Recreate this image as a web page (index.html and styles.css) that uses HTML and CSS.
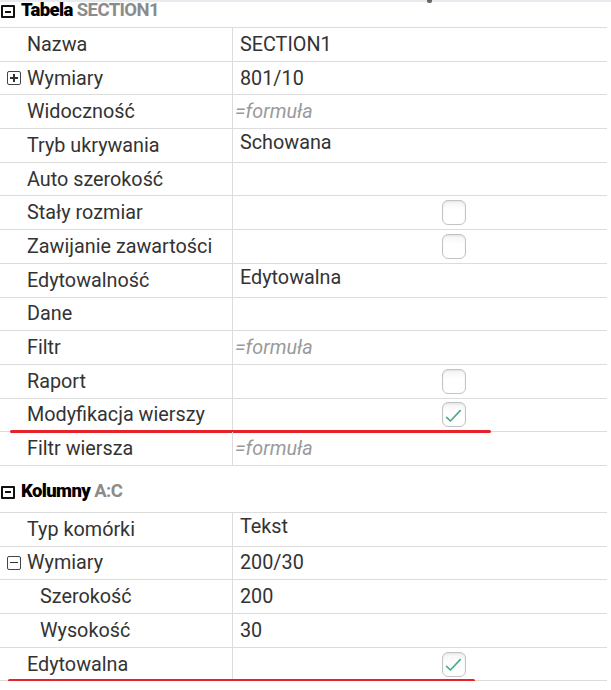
FILE: index.html
```html
<!DOCTYPE html>
<html lang="pl">
<head>
    <meta charset="UTF-8">
    <meta name="viewport" content="width=device-width, initial-scale=1.0">
    <title>Właściwości - SECTION1</title>
    <link rel="stylesheet" href="styles.css">
</head>
<body>

<div class="panel">
    <div class="top-edge"><span class="grip"></span></div>

    <section class="group">
        <div class="group-head">
            <span class="toggle-head"></span>
            <b>Tabela</b> <span class="ref">SECTION1</span>
        </div>
        <div class="props">
            <div class="row"><div class="key">Nazwa</div><div class="val">SECTION1</div></div>
            <div class="row"><div class="key with-toggle"><span class="toggle plus"></span>Wymiary</div><div class="val">801/10</div></div>
            <div class="row"><div class="key">Widoczność</div><div class="val formula">=formuła</div></div>
            <div class="row"><div class="key">Tryb ukrywania</div><div class="val select">Schowana</div></div>
            <div class="row"><div class="key">Auto szerokość</div><div class="val"></div></div>
            <div class="row"><div class="key">Stały rozmiar</div><div class="val"><span class="check"></span></div></div>
            <div class="row"><div class="key">Zawijanie zawartości</div><div class="val"><span class="check"></span></div></div>
            <div class="row"><div class="key">Edytowalność</div><div class="val select">Edytowalna</div></div>
            <div class="row"><div class="key">Dane</div><div class="val"></div></div>
            <div class="row"><div class="key">Filtr</div><div class="val formula">=formuła</div></div>
            <div class="row"><div class="key">Raport</div><div class="val"><span class="check"></span></div></div>
            <div class="row marked"><div class="key">Modyfikacja wierszy</div><div class="val">
                <span class="check">
                    <svg viewBox="0 0 24 24" width="24" height="24"><path d="M4.6 14.3 L8.4 18 L18.2 7.6" fill="none" stroke="#4cae86" stroke-width="1.7" stroke-linecap="round" stroke-linejoin="round"/></svg>
                </span>
            </div></div>
            <div class="row"><div class="key">Filtr wiersza</div><div class="val formula">=formuła</div></div>
        </div>
    </section>

    <section class="group">
        <div class="group-head">
            <span class="toggle-head"></span>
            <b>Kolumny</b> <span class="ref">A:C</span>
        </div>
        <div class="props">
            <div class="row"><div class="key">Typ komórki</div><div class="val select">Tekst</div></div>
            <div class="row"><div class="key with-toggle"><span class="toggle minus"></span>Wymiary</div><div class="val">200/30</div></div>
            <div class="row"><div class="key sub">Szerokość</div><div class="val">200</div></div>
            <div class="row"><div class="key sub">Wysokość</div><div class="val">30</div></div>
            <div class="row marked short"><div class="key">Edytowalna</div><div class="val">
                <span class="check">
                    <svg viewBox="0 0 24 24" width="24" height="24"><path d="M4.6 14.3 L8.4 18 L18.2 7.6" fill="none" stroke="#4cae86" stroke-width="1.7" stroke-linecap="round" stroke-linejoin="round"/></svg>
                </span>
            </div></div>
        </div>
    </section>
</div>

</body>
</html>
```

FILE: styles.css
```css
body {
    margin: 0;
    background: #fff;
    font-family: Roboto, "Noto Sans", Arial, sans-serif;
    color: #333;
}
.panel {
    position: relative;
    width: 611px;
    overflow: hidden;
}
.top-edge {
    position: absolute;
    top: 0;
    left: 0;
    right: 0;
    height: 2px;
    background: #e8ebef;
    z-index: 2;
}
.grip {
    position: absolute;
    left: 427px;
    top: 0;
    width: 5px;
    height: 3px;
    border-radius: 0 0 2px 2px;
    background: #666;
}

/* section header */
.group-head {
    display: flex;
    align-items: baseline;
    gap: 6px;
    height: 20px;
    padding: 0 0 7px 1px;
    font-size: 18.5px;
    line-height: 20px;
    font-weight: bold;
    color: #000;
    letter-spacing: -0.6px;
}
.group + .group .group-head {
    margin-top: 15px;
    padding-bottom: 11px;
}
.group-head .ref {
    color: #8b8b8b;
    margin-left: -2px;
}
.toggle-head {
    width: 10px;
    height: 9px;
    border: 2px solid #111;
    border-radius: 1px;
    position: relative;
    align-self: center;
    margin-top: 3px;
}
.toggle-head::after {
    content: "";
    position: absolute;
    left: 2px;
    right: 2px;
    top: 3.5px;
    height: 2px;
    background: #111;
}

/* property grid */
.props {
    width: 607px;
    border-top: 1px solid #dcdcdc;
}
.row {
    display: grid;
    grid-template-columns: 232px 1fr;
    height: 33.7px;
    box-sizing: border-box;
    border-bottom: 1px solid #dcdcdc;
    font-size: 19.8px;
    position: relative;
}
.key {
    display: flex;
    align-items: center;
    padding-left: 27px;
    white-space: nowrap;
}
.key.with-toggle {
    padding-left: 7px;
}
.key.sub {
    padding-left: 40px;
}
.val {
    display: flex;
    align-items: center;
    border-left: 1px solid #dcdcdc;
    padding-left: 7px;
    white-space: nowrap;
}
.val.select {
    padding-bottom: 6px;
}
.val.formula {
    padding-left: 2px;
    font-style: italic;
    color: #9a9a9a;
}

.toggle {
    width: 12px;
    height: 12px;
    border: 1.5px solid #444;
    border-radius: 2px;
    margin-right: 6px;
    position: relative;
}
.toggle::before, .toggle.plus::after {
    content: "";
    position: absolute;
    background: #333;
}
.toggle::before {
    left: 2px;
    right: 2px;
    top: 5px;
    height: 1.5px;
}
.toggle.plus::after {
    top: 2px;
    bottom: 2px;
    left: 5px;
    width: 1.5px;
}

.check {
    margin-left: 202px;
    width: 22px;
    height: 23px;
    border: 1px solid #c3c3c3;
    border-radius: 6px;
    background: linear-gradient(#f4f4f4, #fff 40%);
    box-shadow: inset 0 1px 2px rgba(0, 0, 0, 0.08);
    display: flex;
    align-items: center;
    justify-content: center;
}
.check svg {
    display: block;
    flex: none;
}

/* red annotation underline */
.row.marked::after {
    content: "";
    position: absolute;
    left: 10px;
    width: 481px;
    bottom: -2px;
    height: 3px;
    border-radius: 2px;
    background: #e6222b;
}
.row.marked.short::after {
    left: 8px;
    width: 467px;
}
```
